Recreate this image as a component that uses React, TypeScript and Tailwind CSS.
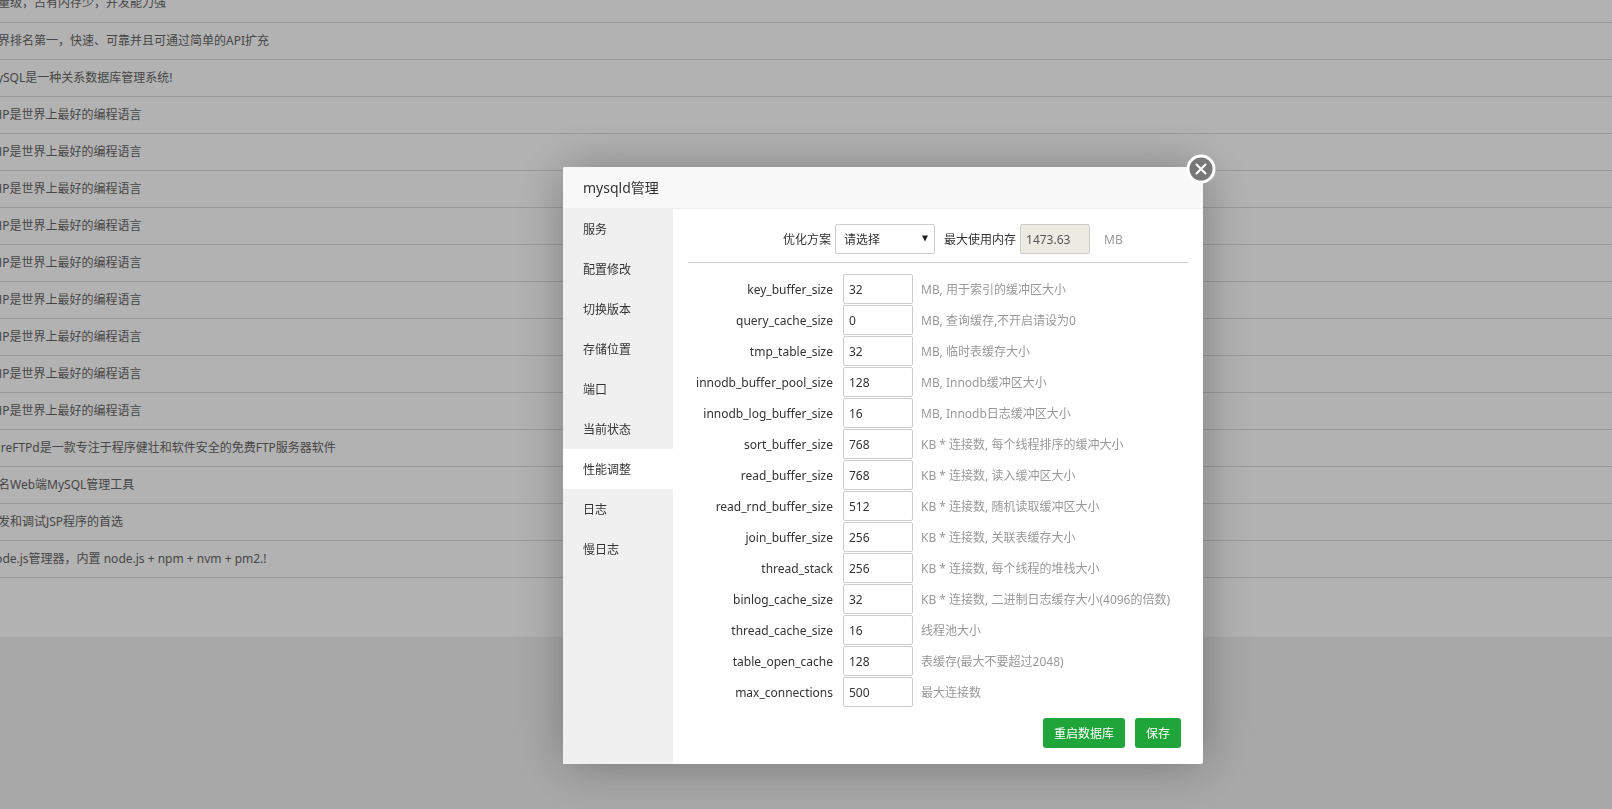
import React from 'react';

const software = [
    '轻量级，占有内存少，并发能力强',
    '世界排名第一，快速、可靠并且可通过简单的API扩充',
    'MySQL是一种关系数据库管理系统!',
    'PHP是世界上最好的编程语言',
    'PHP是世界上最好的编程语言',
    'PHP是世界上最好的编程语言',
    'PHP是世界上最好的编程语言',
    'PHP是世界上最好的编程语言',
    'PHP是世界上最好的编程语言',
    'PHP是世界上最好的编程语言',
    'PHP是世界上最好的编程语言',
    'PHP是世界上最好的编程语言',
    'PureFTPd是一款专注于程序健壮和软件安全的免费FTP服务器软件',
    '知名Web端MySQL管理工具',
    '开发和调试JSP程序的首选',
    'Node.js管理器，内置 node.js + npm + nvm + pm2.!',
];

const menu = ['服务', '配置修改', '切换版本', '存储位置', '端口', '当前状态', '性能调整', '日志', '慢日志'];

const settings = [
    { name: 'key_buffer_size', value: '32', hint: 'MB, 用于索引的缓冲区大小' },
    { name: 'query_cache_size', value: '0', hint: 'MB, 查询缓存,不开启请设为0' },
    { name: 'tmp_table_size', value: '32', hint: 'MB, 临时表缓存大小' },
    { name: 'innodb_buffer_pool_size', value: '128', hint: 'MB, Innodb缓冲区大小' },
    { name: 'innodb_log_buffer_size', value: '16', hint: 'MB, Innodb日志缓冲区大小' },
    { name: 'sort_buffer_size', value: '768', hint: 'KB * 连接数, 每个线程排序的缓冲大小' },
    { name: 'read_buffer_size', value: '768', hint: 'KB * 连接数, 读入缓冲区大小' },
    { name: 'read_rnd_buffer_size', value: '512', hint: 'KB * 连接数, 随机读取缓冲区大小' },
    { name: 'join_buffer_size', value: '256', hint: 'KB * 连接数, 关联表缓存大小' },
    { name: 'thread_stack', value: '256', hint: 'KB * 连接数, 每个线程的堆栈大小' },
    { name: 'binlog_cache_size', value: '32', hint: 'KB * 连接数, 二进制日志缓存大小(4096的倍数)' },
    { name: 'thread_cache_size', value: '16', hint: '线程池大小' },
    { name: 'table_open_cache', value: '128', hint: '表缓存(最大不要超过2048)' },
    { name: 'max_connections', value: '500', hint: '最大连接数' },
];

const SoftwareTable = () => {
    return (
        <div className="overflow-hidden bg-white pb-[59px]">
            {/* the list is scrolled a little to the top left */}
            <table className="-ml-[22px] -mt-[15px] w-[calc(100%+22px)] border-collapse">
                <tbody>
                    {software.map((text, i) => (
                        <tr key={i} className="h-[37px] border-b border-[#ddd]">
                            <td className="whitespace-nowrap px-2 text-[#666]">{text}</td>
                        </tr>
                    ))}
                </tbody>
            </table>
        </div>
    );
};

const SideMenu = () => {
    return (
        <nav className="w-[110px] shrink-0 bg-[#f0f0f0]">
            {menu.map((item) => (
                <button
                    key={item}
                    className={
                        item === '性能调整'
                            ? 'block h-10 w-full bg-white pl-5 pt-0.5 text-left'
                            : 'block h-10 w-full pl-5 pt-0.5 text-left hover:bg-gray-200'
                    }
                >
                    {item}
                </button>
            ))}
        </nav>
    );
};

const TuningForm = () => {
    return (
        <form className="min-w-0 grow px-[15px] pb-4 pt-[15px]" onSubmit={(e) => e.preventDefault()}>
            <div className="flex items-center border-b border-[#ccc] pb-2 pl-[95px]">
                <label htmlFor="plan" className="pt-0.5">优化方案</label>
                <div className="relative ml-1">
                    <select
                        id="plan"
                        className="block h-[30px] w-[100px] appearance-none rounded-xs border border-[#ccc] bg-white pl-2 pt-0.5"
                    >
                        <option>请选择</option>
                        <option>1-2GB</option>
                        <option>2-4GB</option>
                        <option>4-8GB</option>
                    </select>
                    <svg className="pointer-events-none absolute right-[7px] top-[11px] h-[7px] w-[6px]" viewBox="0 0 6 7">
                        <path d="M0 0.5h6L3 6.5z" fill="#222" />
                    </svg>
                </div>
                <label htmlFor="memory" className="ml-[9px] pt-0.5">最大使用内存</label>
                <input
                    id="memory"
                    readOnly
                    defaultValue="1473.63"
                    className="ml-1 h-[30px] w-[70px] rounded-xs border border-[#ccc] bg-[#ebebe4] px-[5px] text-[#555]"
                />
                <span className="ml-[14px] pt-0.5 text-[#999]">MB</span>
            </div>

            <div className="mt-[11px] flex flex-col gap-px">
                {settings.map((s) => (
                    <div key={s.name} className="flex items-center">
                        <label htmlFor={s.name} className="w-[145px] shrink-0 whitespace-nowrap pt-0.5 text-right">
                            {s.name}
                        </label>
                        <input
                            id={s.name}
                            defaultValue={s.value}
                            className="ml-[10px] h-[30px] w-[70px] shrink-0 rounded-xs border border-[#ccc] px-[5px]"
                        />
                        <span className="ml-2 whitespace-nowrap pt-0.5 text-[#999]">{s.hint}</span>
                    </div>
                ))}
            </div>

            <div className="mt-[11px] flex justify-end gap-[10px] pr-[7px]">
                <button className="h-[30px] rounded-[3px] bg-[#20a53a] px-[11px] pt-0.5 text-white">重启数据库</button>
                <button className="h-[30px] rounded-[3px] bg-[#20a53a] px-[11px] pt-0.5 text-white">保存</button>
            </div>
        </form>
    );
};

const App = () => {
    return (
        <div className="min-h-screen bg-[#f1f1f1] font-['Noto_Sans','Noto_Sans_CJK_SC',sans-serif] text-xs text-[#333]">
            <SoftwareTable />

            {/* Mask and dialog */}
            <div className="fixed inset-0 flex items-start justify-center bg-black/30 pl-[154px] pt-[167px]">
                <div
                    role="dialog"
                    aria-labelledby="dialog-title"
                    className="relative w-[640px] rounded-xs bg-white shadow-[1px_1px_50px_rgba(0,0,0,0.3)]"
                >
                    <h2
                        id="dialog-title"
                        className="h-[42px] rounded-t-xs border-b border-[#eee] bg-[#f8f8f8] pl-5 text-sm leading-[42px]"
                    >
                        mysqld管理
                    </h2>
                    <div className="flex">
                        <SideMenu />
                        <TuningForm />
                    </div>
                    <button aria-label="关闭" className="absolute -right-[13px] -top-[13px] h-[30px] w-[30px]">
                        <svg viewBox="0 0 30 30" className="h-full w-full">
                            <circle cx="15" cy="15" r="13" fill="#777" stroke="#fff" strokeWidth="3" />
                            <path d="M10.5 10.5l9 9M19.5 10.5l-9 9" stroke="#fff" strokeWidth="2" strokeLinecap="round" />
                        </svg>
                    </button>
                </div>
            </div>
        </div>
    );
};

export default App;
